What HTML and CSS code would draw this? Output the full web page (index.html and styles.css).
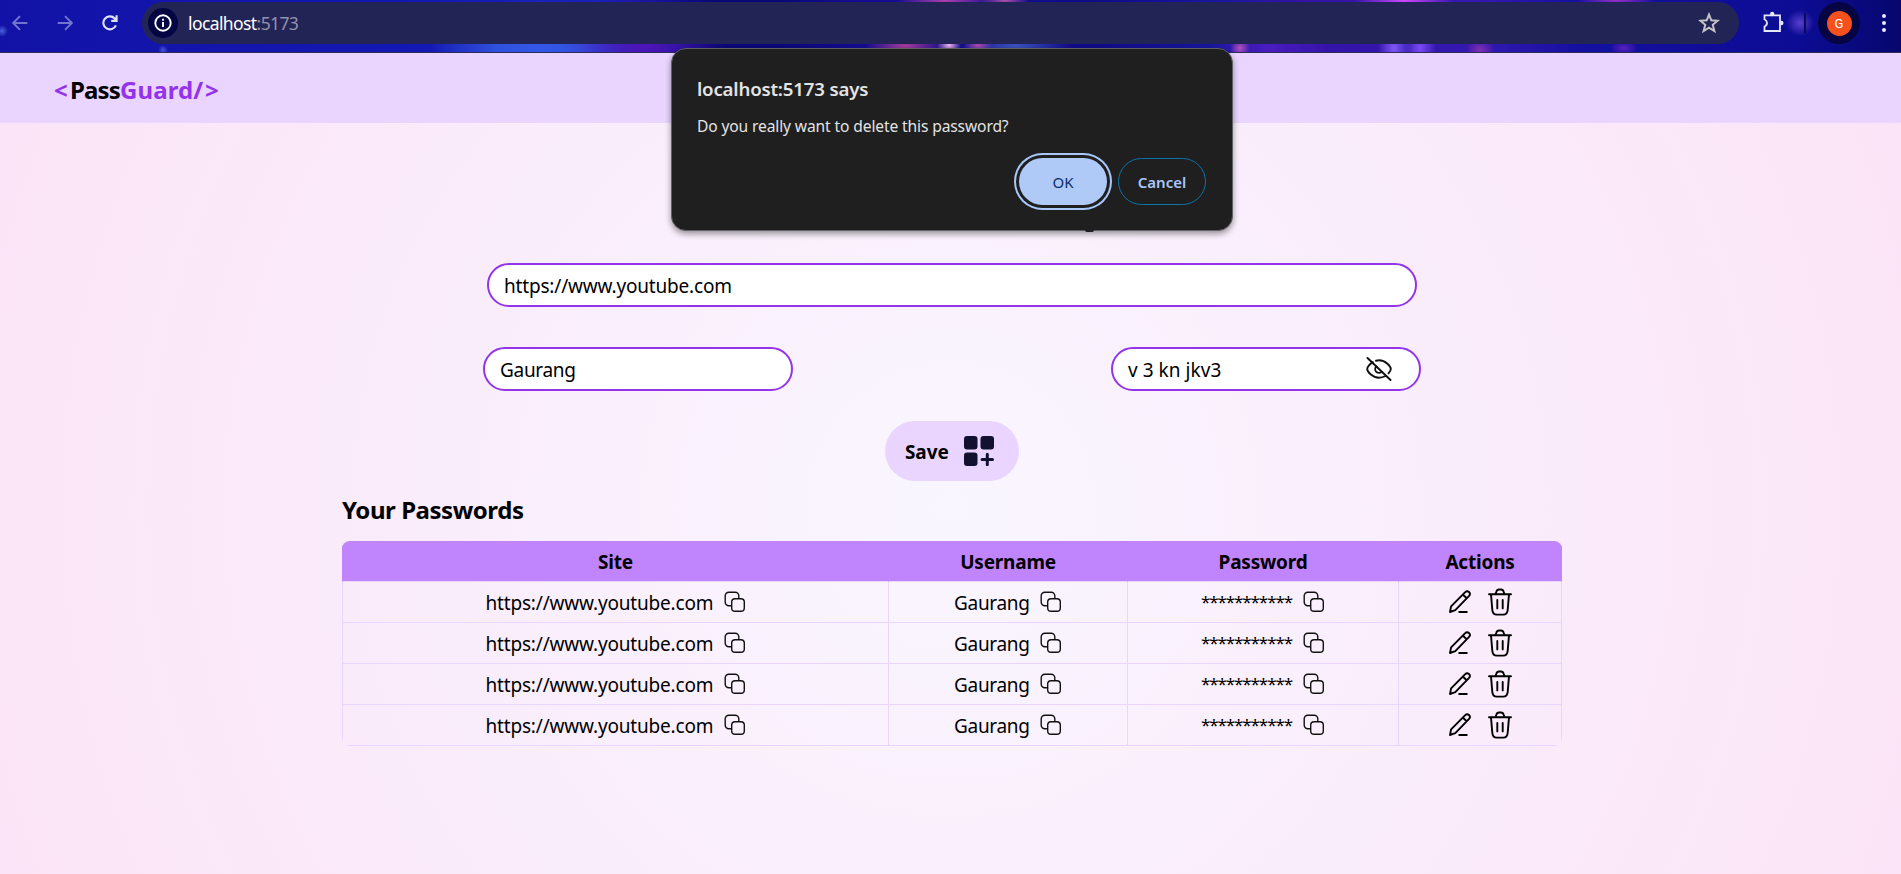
FILE: index.html
```html
<!DOCTYPE html>
<html lang="en">
<head>
<meta charset="utf-8">
<title>PassGuard</title>
<link rel="stylesheet" href="styles.css">
</head>
<body>
<svg class="defs" width="0" height="0" aria-hidden="true">
  <symbol id="copy" viewBox="0 0 22 22"><g fill="none" stroke="#111" stroke-width="1.4"><rect x="7.7" y="7.7" width="12.6" height="12.6" rx="3.4"/><path d="M7.7 14.7H5A3.6 3.6 0 0 1 1.2 11V4.8A3.6 3.6 0 0 1 4.8 1.2h6.4A3.6 3.6 0 0 1 14.8 4.8v2.9"/></g></symbol>
  <symbol id="edit" viewBox="0 0 24 24"><g fill="none" stroke="#000" stroke-width="1.9" stroke-linejoin="round" stroke-linecap="round"><path d="M2 22l1.100-5.600L17.200 2.200a2.600 2.600 0 0 1 3.900 3.600L7.300 20.200zM15 4.800l3.700 3.500M11.200 22h7.600"/></g></symbol>
  <symbol id="trash" viewBox="0 0 26 28"><g fill="none" stroke="#000" stroke-width="1.9" stroke-linecap="round" stroke-linejoin="round"><path d="M2 6.200h22M4 6.400l1.300 15.400c.3 3.400 1.400 4.800 4.400 4.800h6.600c3 0 4.100-1.400 4.400-4.800L22 6.400M8.600 6l.7-2.200C9.700 2.300 10.400 1.500 12 1.500h2c1.600 0 2.300.8 2.700 2.300L17.400 6M10.300 12v8.400M15.700 12v8.400"/></g></symbol>
</svg>

<header class="toolbar">
  <svg class="nav-icon dim" viewBox="0 0 16 16"><path d="M15.300 8H1.500M8 1.200L1.200 8 8 14.800"/></svg>
  <svg class="nav-icon dim fwd" viewBox="0 0 16 16"><path d="M.7 8h13.800M8 1.200L14.800 8 8 14.800"/></svg>
  <svg class="nav-icon reload" viewBox="0 0 16 16"><path d="M13.900 10.300A6.500 6.500 0 1 1 12.700 3.500L14.300 5.300M14.600.3v5.600H9.200"/></svg>
  <div class="omnibox">
    <span class="info"><svg viewBox="0 0 18 18"><circle cx="9" cy="9" r="7.700" fill="none" stroke="#fff" stroke-width="1.900"/><path d="M9 8v5M9 4.700v2" stroke="#fff" stroke-width="1.900"/></svg></span>
    <span class="url">localhost<i>:5173</i></span>
    <svg class="star" viewBox="0 0 20 20"><path d="M10 2.300l2.100 5.300 5.700.4-4.400 3.600 1.500 5.700L10 14.200l-4.900 3.100 1.500-5.700L2.200 8l5.700-.4z"/></svg>
  </div>
  <svg class="puzzle" viewBox="0 0 22 22"><path d="M2.500 4.300H18V20H2.500V15.500Q5 14.500 5 12T2.500 8.200Z"/><circle cx="10.200" cy="3" r="2.200"/><circle cx="19.300" cy="12" r="2.200"/></svg>
  <span class="sep"></span>
  <span class="profile"><b>G</b></span>
  <span class="dots"><i></i><i></i><i></i></span>
</header>

<nav class="navbar"><span class="brand"><span class="angle">&lt;</span><span class="pass">Pass</span><em>Guard/</em><span class="angle close">&gt;</span></span></nav>

<main class="page">
  <div class="field wide"><span class="t-url">https://www.youtube.com</span></div>
  <div class="pair">
    <div class="field"><span class="t-name">Gaurang</span></div>
    <div class="field"><span class="t-pass">v 3 kn jkv3</span>
      <svg class="eye" viewBox="0 0 26 24"><g fill="none" stroke="#111" stroke-width="1.900" stroke-linecap="round"><path d="M1.500 1l23 22M7 5.200C3.500 7 1.200 10.300 1.200 12c0 2.500 5 8.700 11.800 8.700 2.500 0 4.600-.7 6.400-1.700M10 3.700c1-.2 2-.4 3-.4 6.800 0 11.800 6.200 11.800 8.700 0 1.200-.9 2.800-2.300 4.300"/><path d="M10.300 9.500a3.700 3.700 0 0 0 5.300 5.300"/></g></svg>
    </div>
  </div>
  <button class="save"><span>Save</span>
    <svg viewBox="0 0 30 30" fill="#12112f"><rect width="13.500" height="13.500" rx="3"/><rect x="16.500" width="13.500" height="13.500" rx="3"/><rect y="16.500" width="13.500" height="13.500" rx="3"/><path d="M23.300 18.300v10.400M18.100 23.500h10.400" stroke="#12112f" stroke-width="3" stroke-linecap="round"/></svg>
  </button>

  <section class="list">
    <h2>Your Passwords</h2>
    <div class="table">
      <div class="row head"><div>Site</div><div>Username</div><div>Password</div><div>Actions</div></div>
      <div class="row"><div><span class="t-url">https://www.youtube.com</span><svg class="copy"><use href="#copy"/></svg></div><div><span class="t-name">Gaurang</span><svg class="copy"><use href="#copy"/></svg></div><div><span class="stars">***********</span><svg class="copy"><use href="#copy"/></svg></div><div class="actions"><svg class="edit"><use href="#edit"/></svg><svg class="trash"><use href="#trash"/></svg></div></div>
      <div class="row"><div><span class="t-url">https://www.youtube.com</span><svg class="copy"><use href="#copy"/></svg></div><div><span class="t-name">Gaurang</span><svg class="copy"><use href="#copy"/></svg></div><div><span class="stars">***********</span><svg class="copy"><use href="#copy"/></svg></div><div class="actions"><svg class="edit"><use href="#edit"/></svg><svg class="trash"><use href="#trash"/></svg></div></div>
      <div class="row"><div><span class="t-url">https://www.youtube.com</span><svg class="copy"><use href="#copy"/></svg></div><div><span class="t-name">Gaurang</span><svg class="copy"><use href="#copy"/></svg></div><div><span class="stars">***********</span><svg class="copy"><use href="#copy"/></svg></div><div class="actions"><svg class="edit"><use href="#edit"/></svg><svg class="trash"><use href="#trash"/></svg></div></div>
      <div class="row"><div><span class="t-url">https://www.youtube.com</span><svg class="copy"><use href="#copy"/></svg></div><div><span class="t-name">Gaurang</span><svg class="copy"><use href="#copy"/></svg></div><div><span class="stars">***********</span><svg class="copy"><use href="#copy"/></svg></div><div class="actions"><svg class="edit"><use href="#edit"/></svg><svg class="trash"><use href="#trash"/></svg></div></div>
    </div>
  </section>
</main>

<div class="dialog" role="dialog">
  <h1>localhost:5173 says</h1>
  <p>Do you really want to delete this password?</p>
  <div class="buttons"><button class="ok">OK</button><button class="cancel">Cancel</button></div>
  <i class="tail"></i>
</div>
</body>
</html>
```
FILE: styles.css
```css
* { box-sizing: border-box; }
body {
  margin: 0;
  width: 1901px;
  height: 874px;
  overflow: hidden;
  display: flex;
  flex-direction: column;
  position: relative;
  font: 400 19px/28px "Noto Sans", "Open Sans", sans-serif;
  color: #000;
}
svg, span { flex: none; }
button { font: inherit; border: 0; padding: 0; margin: 0; }
.defs { position: absolute; }

/* browser toolbar */
.toolbar {
  height: 53px;
  display: flex;
  align-items: flex-start;
  border-bottom: 1px solid #2b2d5c;
  background:
    radial-gradient(ellipse 14px 13px at 1800px 23px, #5a3ed0, transparent),
    radial-gradient(ellipse 40px 8px at 1616px 0, #9a30c8, transparent),
    radial-gradient(ellipse 14px 8px at 1624px 48px, #5a20c0, transparent),
    radial-gradient(ellipse 5px 5px at 163px 50px, #4a55d8, transparent),
    radial-gradient(ellipse 6px 6px at 2px 31px, #4a60e0, transparent),
    radial-gradient(ellipse 16px 30px at 1394px 48px, #8058f8, transparent),
    radial-gradient(ellipse 16px 30px at 1420px 48px, #7a4cf4, transparent),
    radial-gradient(ellipse 14px 12px at 1480px 50px, #8030b0, transparent),
    radial-gradient(ellipse 50px 20px at 1404px 0, #d048ff, transparent),
    radial-gradient(ellipse 12px 10px at 949px 45px, #f8b8f0, transparent),
    radial-gradient(ellipse 14px 10px at 978px 45px, #b04ab0, transparent),
    radial-gradient(ellipse 40px 14px at 905px 46px, #a83c9c, transparent),
    radial-gradient(ellipse 50px 16px at 945px 0, #b040b0, transparent),
    radial-gradient(ellipse 24px 12px at 1005px 0, #b050a8, transparent),
    radial-gradient(ellipse 55px 14px at 1015px 46px, #3c54c0, transparent),
    radial-gradient(ellipse 10px 12px at 1240px 48px, #b050b8, transparent),
    radial-gradient(ellipse 60px 30px at 1270px 48px, #4a1cc0, transparent),
    radial-gradient(ellipse 80px 50px at 645px 45px, #5014b8, transparent),
    radial-gradient(ellipse 110px 50px at 540px 48px, #3558e8, #3050de 40%, transparent),
    linear-gradient(90deg, #1212a6 0, #1418b2 400px, #1a20b8 600px, #0a0878 710px, #0a0878 780px, #140c90 860px, #100c88 1100px, #1818a0 1220px, #3412a8 1300px, #3418b0 1480px, #1410a0 1580px, #0c0c94 1800px, #07076e 1901px);
}
.nav-icon { width: 16px; height: 16px; margin: 15px 0 0 12px; fill: none; stroke: #dfe2fb; stroke-width: 1.9; }
.nav-icon.dim { stroke: #7175cf; }
.nav-icon.fwd { margin-left: 29px; }
.nav-icon.reload { margin-left: 29px; stroke-width: 2.1; }
.omnibox {
  width: 1597px;
  height: 42px;
  margin: 2px 0 0 24px;
  padding-left: 6px;
  border-radius: 21px;
  background: #232456;
  display: flex;
  align-items: center;
}
.info { width: 30px; height: 30px; border-radius: 50%; background: #050543; display: flex; align-items: center; justify-content: center; }
.info svg { width: 18px; height: 18px; }
.url { width: 1505px; margin-left: 10px; font-size: 17.500px; letter-spacing: -.6px; color: #fff; }
.url i { font-style: normal; color: #9292ad; }
.star { width: 22px; height: 22px; margin-left: 5px; fill: none; stroke: #c4c4c8; stroke-width: 1.8; }
.puzzle { width: 22px; height: 22px; margin: 11px 0 0 23px; fill: none; stroke: #e4e6fa; stroke-width: 1.8; }
.puzzle circle { fill: #e4e6fa; stroke: none; }
.sep { width: 2px; height: 20px; margin: 13px 0 0 20px; background: #0a0a55; }
.profile { width: 42px; height: 42px; margin: 2px 0 0 12px; border-radius: 50%; background: #050543; display: flex; align-items: center; justify-content: center; }
.profile b { width: 25px; height: 25px; border-radius: 50%; background: #f6511d; color: #fff; font: 400 13px/25px Roboto, sans-serif; text-align: center; }
.dots { margin: 14px 0 0 22px; display: flex; flex-direction: column; gap: 3px; }
.dots i { width: 4px; height: 4px; border-radius: 50%; background: #e8e8f8; }

/* app header */
.navbar { height: 70px; padding: 19px 0 0 54px; background: #e9d5ff; }
.brand { display: flex; font-weight: 700; font-size: 24px; line-height: 36px; white-space: nowrap; }
.brand .pass { width: 50px; letter-spacing: -.9px; }
.brand em { width: 83px; font-style: normal; color: #9333ea; letter-spacing: .1px; }
.brand .angle { width: 16px; color: #9333ea; }
.brand .close { margin-left: 2px; }

.page {
  flex: 1;
  display: flex;
  flex-direction: column;
  align-items: center;
  padding: 140px 0 0 3px;
  background: radial-gradient(circle 1020px at 950px 384px, #f9f6ff, #fbe4f7);
}
.field {
  width: 310px;
  height: 44px;
  padding: 1px 0 0 15px;
  border: 2px solid #9333ea;
  border-radius: 22px;
  background: #fff;
  display: flex;
  align-items: center;
  white-space: nowrap;
}
.field.wide { width: 930px; }
.pair { width: 938px; margin-top: 40px; display: flex; justify-content: space-between; }
.eye { width: 26px; height: 24px; margin-left: auto; margin-right: 27px; margin-top: -2px; }
.t-url { width: 227px; letter-spacing: -.18px; }
.t-name { width: 75px; letter-spacing: -.3px; }
.t-pass { letter-spacing: .05px; }
.save { width: 134px; height: 60px; margin-top: 30px; padding: 0 25px 0 20px; border-radius: 30px; background: #e9d5ff; display: flex; align-items: center; justify-content: space-between; font-weight: 700; font-size: 19px; color: #000; }
.save span { padding-top: 2px; letter-spacing: -.1px; }
.save svg { width: 30px; height: 30px; }

.list { width: 1220px; margin-top: 9px; }
.list h2 { margin: 0 0 11px; height: 40px; font-size: 24px; font-weight: 700; line-height: 40px; letter-spacing: -.45px; }
.table { border-radius: 8px; overflow: hidden; }
.row { display: grid; grid-template-columns: 546px 239px 271px 164px; height: 41px; }
.row > div { display: flex; align-items: center; justify-content: center; border: solid #e9d5ff; border-width: 0 0 1px 1px; white-space: nowrap; }
.row > div:last-child { border-right-width: 1px; }
.row.head > div { padding-top: 2px; background: #c084fc; border-left-color: #c084fc; border-right-color: #c084fc; font-weight: 700; font-size: 19px; letter-spacing: -.2px; }
.row .t-url, .row .t-name { padding-top: 2px; }
.copy { width: 22px; height: 22px; margin-left: 11px; }
.stars { width: 91px; font-size: 17px; letter-spacing: -1.1px; }
.actions .edit { width: 24px; height: 24px; }
.actions .trash { width: 26px; height: 28px; margin-left: 15px; }

/* confirm dialog floats over the page and the toolbar edge */
.dialog {
  position: absolute;
  left: 671px;
  top: 48px;
  width: 562px;
  height: 183px;
  padding: 24px 26px 0 25px;
  border: 1px solid #5f6063;
  border-radius: 15px;
  background: #1f1f1f;
  box-shadow: 0 3px 6px rgba(0, 0, 0, .4);
  color: #e3e3e3;
  white-space: nowrap;
}
.dialog h1 { margin: 0; font-size: 18.700px; font-weight: 600; line-height: 32px; letter-spacing: -.2px; }
.dialog p { margin: 8px 0 0; font-size: 15.600px; font-weight: 400; line-height: 26px; letter-spacing: -.13px; }
.buttons { display: flex; justify-content: flex-end; gap: 11px; margin-top: 19px; font-size: 15px; }
.buttons button { width: 88px; height: 47px; border-radius: 24px; }
.buttons .ok { background: #b0caf8; color: #0c2d6b; box-shadow: 0 0 0 3px #1f1f1f, 0 0 0 5px #a8c7fa; font-weight: 450; }
.buttons .cancel { background: none; border: 1px solid #0a74aa; color: #a8c7fa; font-weight: 600; }
.tail { position: absolute; left: 413px; bottom: -2px; width: 9px; height: 2px; border-radius: 0 0 5px 5px; background: #1f1f1f; }
```
